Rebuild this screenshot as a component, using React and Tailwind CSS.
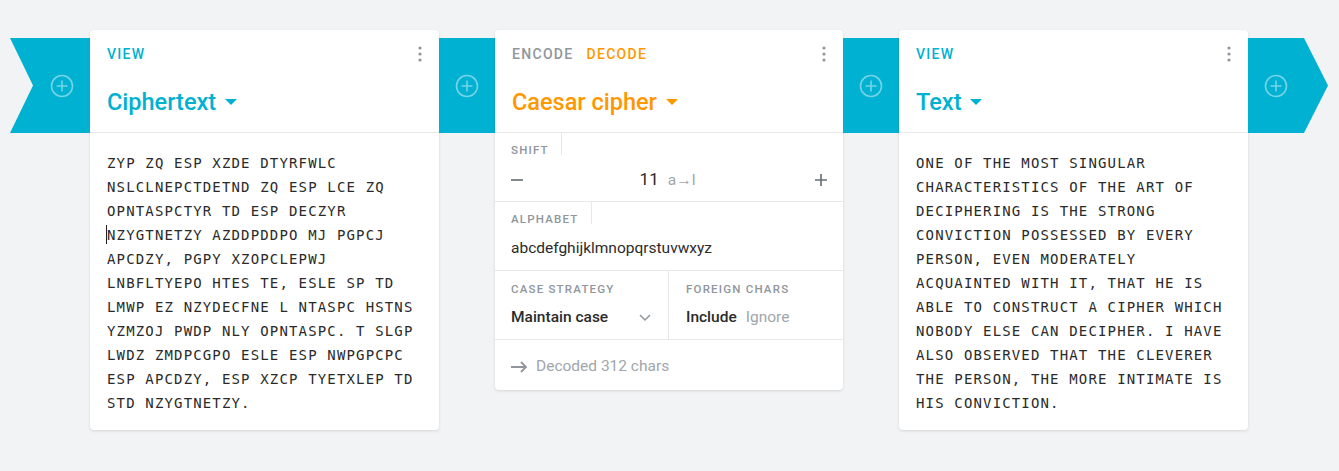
import React from 'react';

const CYAN = 'text-[#00b1d2]';

const PlusCircle = () => (
  <svg width="24" height="24" viewBox="0 0 24 24" fill="none" stroke="rgba(255,255,255,0.45)" strokeWidth="1.6">
    <circle cx="12" cy="12" r="10.5" />
    <path d="M12 6.5v11M6.5 12h11" />
  </svg>
);

const Dots = () => (
  <svg width="4" height="16" viewBox="0 0 4 16" className="fill-[#8f969c]">
    <circle cx="2" cy="2" r="1.6" />
    <circle cx="2" cy="8" r="1.6" />
    <circle cx="2" cy="14" r="1.6" />
  </svg>
);

const Caret = ({ color }) => (
  <svg width="12" height="6" viewBox="0 0 12 6" className={color}>
    <path d="M0 0h12L6 6z" fill="currentColor" />
  </svg>
);

const Connector = () => (
  <div className="mt-2 h-[95px] w-14 shrink-0 bg-[#00b1d2] flex items-center justify-center">
    <PlusCircle />
  </div>
);

const CardHeader = ({ children, title, titleColor, caretColor }) => (
  <div className="h-[103px] border-b border-[#e6e8ea] px-[17px] flex flex-col">
    <div className="mt-[14px] h-5 flex items-center justify-between">
      <div className="flex items-center gap-[13px] text-[14px] font-medium tracking-[1.3px]">{children}</div>
      <Dots />
    </div>
    <div className={`mt-6 flex items-center gap-[9px] text-[23.5px] leading-[28px] font-medium ${titleColor}`}>
      <span>{title}</span>
      <Caret color={caretColor} />
    </div>
  </div>
);

const monoCls = "px-[17px] pt-[18px] pb-[15px] font-['DejaVu_Sans_Mono',monospace] text-[14px] leading-6 tracking-[1.15px] text-[#2a2a2a] whitespace-pre-line";

const Label = ({ children }) => (
  <div className="w-fit h-[22px] pl-4 pr-3 pt-[11px] border-r border-[#e6e8ea] text-[11.5px] leading-[12px] font-medium tracking-[1.2px] text-[#8f969c]">
    {children}
  </div>
);

const cipherTop = `ZYP ZQ ESP XZDE DTYRFWLC
NSLCLNEPCTDETND ZQ ESP LCE ZQ
OPNTASPCTYR TD ESP DECZYR
`;

const cipherRest = `NZYGTNETZY AZDDPDDPO MJ PGPCJ
APCDZY, PGPY XZOPCLEPWJ
LNBFLTYEPO HTES TE, ESLE SP TD
LMWP EZ NZYDECFNE L NTASPC HSTNS
YZMZOJ PWDP NLY OPNTASPC. T SLGP
LWDZ ZMDPCGPO ESLE ESP NWPGPCPC
ESP APCDZY, ESP XZCP TYETXLEP TD
STD NZYGTNETZY.`;

const plain = `ONE OF THE MOST SINGULAR
CHARACTERISTICS OF THE ART OF
DECIPHERING IS THE STRONG
CONVICTION POSSESSED BY EVERY
PERSON, EVEN MODERATELY
ACQUAINTED WITH IT, THAT HE IS
ABLE TO CONSTRUCT A CIPHER WHICH
NOBODY ELSE CAN DECIPHER. I HAVE
ALSO OBSERVED THAT THE CLEVERER
THE PERSON, THE MORE INTIMATE IS
HIS CONVICTION.`;

export default function App() {
  return (
    <div className="min-h-[471px] w-full bg-[#f2f3f5] font-['Roboto',sans-serif] pt-[30px] pl-[10px]">
      <div className="flex items-start">
        {/* left ribbon with notch */}
        <div className="mt-2 h-[95px] w-20 shrink-0 bg-[#00b1d2] [clip-path:polygon(0_0,100%_0,100%_100%,0_100%,23px_50%)] flex items-center pl-10">
          <PlusCircle />
        </div>

        {/* Ciphertext viewer */}
        <div className="w-[349px] shrink-0 bg-white rounded-sm shadow-[0_1px_3px_rgba(0,0,0,0.12)]">
          <CardHeader title="Ciphertext" titleColor={CYAN} caretColor={CYAN}>
            <span className={CYAN}>VIEW</span>
          </CardHeader>
          <div className={monoCls}>
            {cipherTop}
            <span className="relative">
              <span className="absolute -left-[1px] top-[-2px] h-[19px] w-px bg-[#222]" />
            </span>
            {cipherRest}
          </div>
        </div>

        <Connector />

        {/* Caesar cipher */}
        <div className="w-[348px] shrink-0 bg-white rounded-sm shadow-[0_1px_3px_rgba(0,0,0,0.12)]">
          <CardHeader title="Caesar cipher" titleColor="text-[#ff9800]" caretColor="text-[#ff9800]">
            <span className="text-[#8f969c]">ENCODE</span>
            <span className="text-[#ff9800]">DECODE</span>
          </CardHeader>

          <div className="border-b border-[#e6e8ea] h-[69px]">
            <Label>SHIFT</Label>
            <div className="h-[46px] pt-1 px-4 flex items-center justify-between text-[#666d73]">
              <svg width="12" height="12" viewBox="0 0 12 12"><path d="M0 6h12" stroke="currentColor" strokeWidth="1.6" /></svg>
              <div className="flex items-baseline gap-[9px] pr-[3px]">
                <span className="text-[17px] text-[#2b2b2b]">11</span>
                <span className="text-[15.5px] text-[#a0a6ab]">a→l</span>
              </div>
              <svg width="12" height="12" viewBox="0 0 12 12"><path d="M0 6h12M6 0v12" stroke="currentColor" strokeWidth="1.6" /></svg>
            </div>
          </div>

          <div className="border-b border-[#e6e8ea] h-[69px]">
            <Label>ALPHABET</Label>
            <div className="h-[46px] pt-1 px-4 flex items-center text-[15.5px] text-[#2b2b2b]">
              abcdefghijklmnopqrstuvwxyz
            </div>
          </div>

          <div className="border-b border-[#e6e8ea] h-[69px] grid grid-cols-2">
            <div className="border-r border-[#e6e8ea] px-4 pt-[12px]">
              <div className="text-[11.5px] leading-[12px] font-medium tracking-[1.2px] text-[#8f969c]">CASE STRATEGY</div>
              <div className="mt-[11px] flex items-center justify-between text-[15.5px] font-medium text-[#2b2b2b]">
                <span>Maintain case</span>
                <svg width="12" height="8" viewBox="0 0 12 8" className="mr-[1px]"><path d="M1 1l5 5 5-5" fill="none" stroke="#8f969c" strokeWidth="1.5" /></svg>
              </div>
            </div>
            <div className="pl-[17px] pt-[12px]">
              <div className="text-[11.5px] leading-[12px] font-medium tracking-[1.2px] text-[#8f969c]">FOREIGN CHARS</div>
              <div className="mt-[11px] flex items-center gap-[9px] text-[15.5px] font-medium">
                <span className="text-[#2b2b2b]">Include</span>
                <span className="text-[#a0a6ab] font-normal">Ignore</span>
              </div>
            </div>
          </div>

          <div className="h-[50px] pt-1 px-4 flex items-center gap-2 text-[15.5px] text-[#a0a6ab]">
            <svg width="17" height="12" viewBox="0 0 17 12"><path d="M0 6h15M10 1l5 5-5 5" fill="none" stroke="#8f969c" strokeWidth="1.8" /></svg>
            <span>Decoded 312 chars</span>
          </div>
        </div>

        <Connector />

        {/* Text viewer */}
        <div className="w-[349px] shrink-0 bg-white rounded-sm shadow-[0_1px_3px_rgba(0,0,0,0.12)]">
          <CardHeader title="Text" titleColor={CYAN} caretColor={CYAN}>
            <span className={CYAN}>VIEW</span>
          </CardHeader>
          <div className={monoCls}>{plain}</div>
        </div>

        {/* right ribbon arrow */}
        <div className="mt-2 h-[95px] w-20 shrink-0 bg-[#00b1d2] [clip-path:polygon(0_0,56px_0,100%_50%,56px_100%,0_100%)] flex items-center pl-4">
          <PlusCircle />
        </div>
      </div>
    </div>
  );
}
